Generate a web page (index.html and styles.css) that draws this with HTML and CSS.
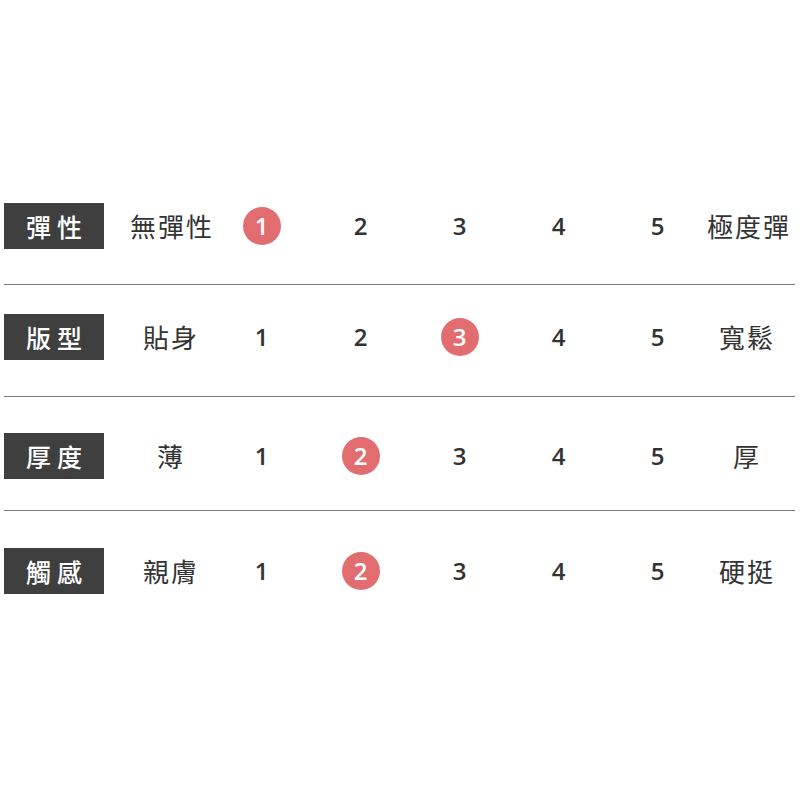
FILE: index.html
```html
<!DOCTYPE html>
<html lang="zh-Hant">
<head>
<meta charset="utf-8">
<title>尺寸表</title>
<link rel="stylesheet" href="styles.css">
</head>
<body>
<div class="table">
  <div class="row r1">
    <div class="label">彈性</div>
    <div class="lo">無彈性</div>
    <div class="n"><span class="dot">1</span></div>
    <div class="n">2</div>
    <div class="n">3</div>
    <div class="n">4</div>
    <div class="n">5</div>
    <div class="hi">極度彈</div>
  </div>
  <div class="row r2">
    <div class="label">版型</div>
    <div class="lo">貼身</div>
    <div class="n">1</div>
    <div class="n">2</div>
    <div class="n"><span class="dot">3</span></div>
    <div class="n">4</div>
    <div class="n">5</div>
    <div class="hi">寬鬆</div>
  </div>
  <div class="row r3">
    <div class="label">厚度</div>
    <div class="lo">薄</div>
    <div class="n">1</div>
    <div class="n"><span class="dot">2</span></div>
    <div class="n">3</div>
    <div class="n">4</div>
    <div class="n">5</div>
    <div class="hi">厚</div>
  </div>
  <div class="row r4">
    <div class="label">觸感</div>
    <div class="lo">親膚</div>
    <div class="n">1</div>
    <div class="n"><span class="dot">2</span></div>
    <div class="n">3</div>
    <div class="n">4</div>
    <div class="n">5</div>
    <div class="hi">硬挺</div>
  </div>
</div>
</body>
</html>
```
FILE: styles.css
```css
html, body {
  margin: 0;
  padding: 0;
  background: #ffffff;
}

body {
  font-family: "Noto Sans CJK TC", "Noto Sans", sans-serif;
  color: #333333;
}

.table {
  margin-top: 203px;
  margin-left: 4px;
  width: 791px;
}

.row {
  display: grid;
  grid-template-columns: 100px 108px repeat(5, 99px) 88px;
  align-items: center;
  border-bottom: 1px solid #7a7a7a;
}

.r1 { padding-top: 0; padding-bottom: 35px; }
.r2 { padding-top: 29px; padding-bottom: 36px; }
.r3 { padding-top: 36px; padding-bottom: 31px; }
.r4 { padding-top: 37px; padding-bottom: 0; border-bottom: none; }

.label {
  height: 46px;
  background: #3f3f3f;
  color: #ffffff;
  font-size: 25px;
  font-weight: 500;
  letter-spacing: 6px;
  padding-left: 6px;
  display: flex;
  align-items: center;
  justify-content: center;
  line-height: 1;
}

.lo, .hi {
  font-size: 26px;
  letter-spacing: 2px;
  text-align: center;
  line-height: 1;
  white-space: nowrap;
  color: #333333;
}

.lo { padding-left: 26px; }
.hi { padding-right: 8px; }

.n {
  font-family: "Open Sans", "Noto Sans", sans-serif;
  font-weight: 600;
  font-size: 24px;
  line-height: 1;
  color: #333333;
  display: flex;
  justify-content: center;
  align-items: center;
}

.dot {
  width: 38px;
  height: 38px;
  border-radius: 50%;
  background: #e26d70;
  color: #ffffff;
  display: flex;
  align-items: center;
  justify-content: center;
}
```
